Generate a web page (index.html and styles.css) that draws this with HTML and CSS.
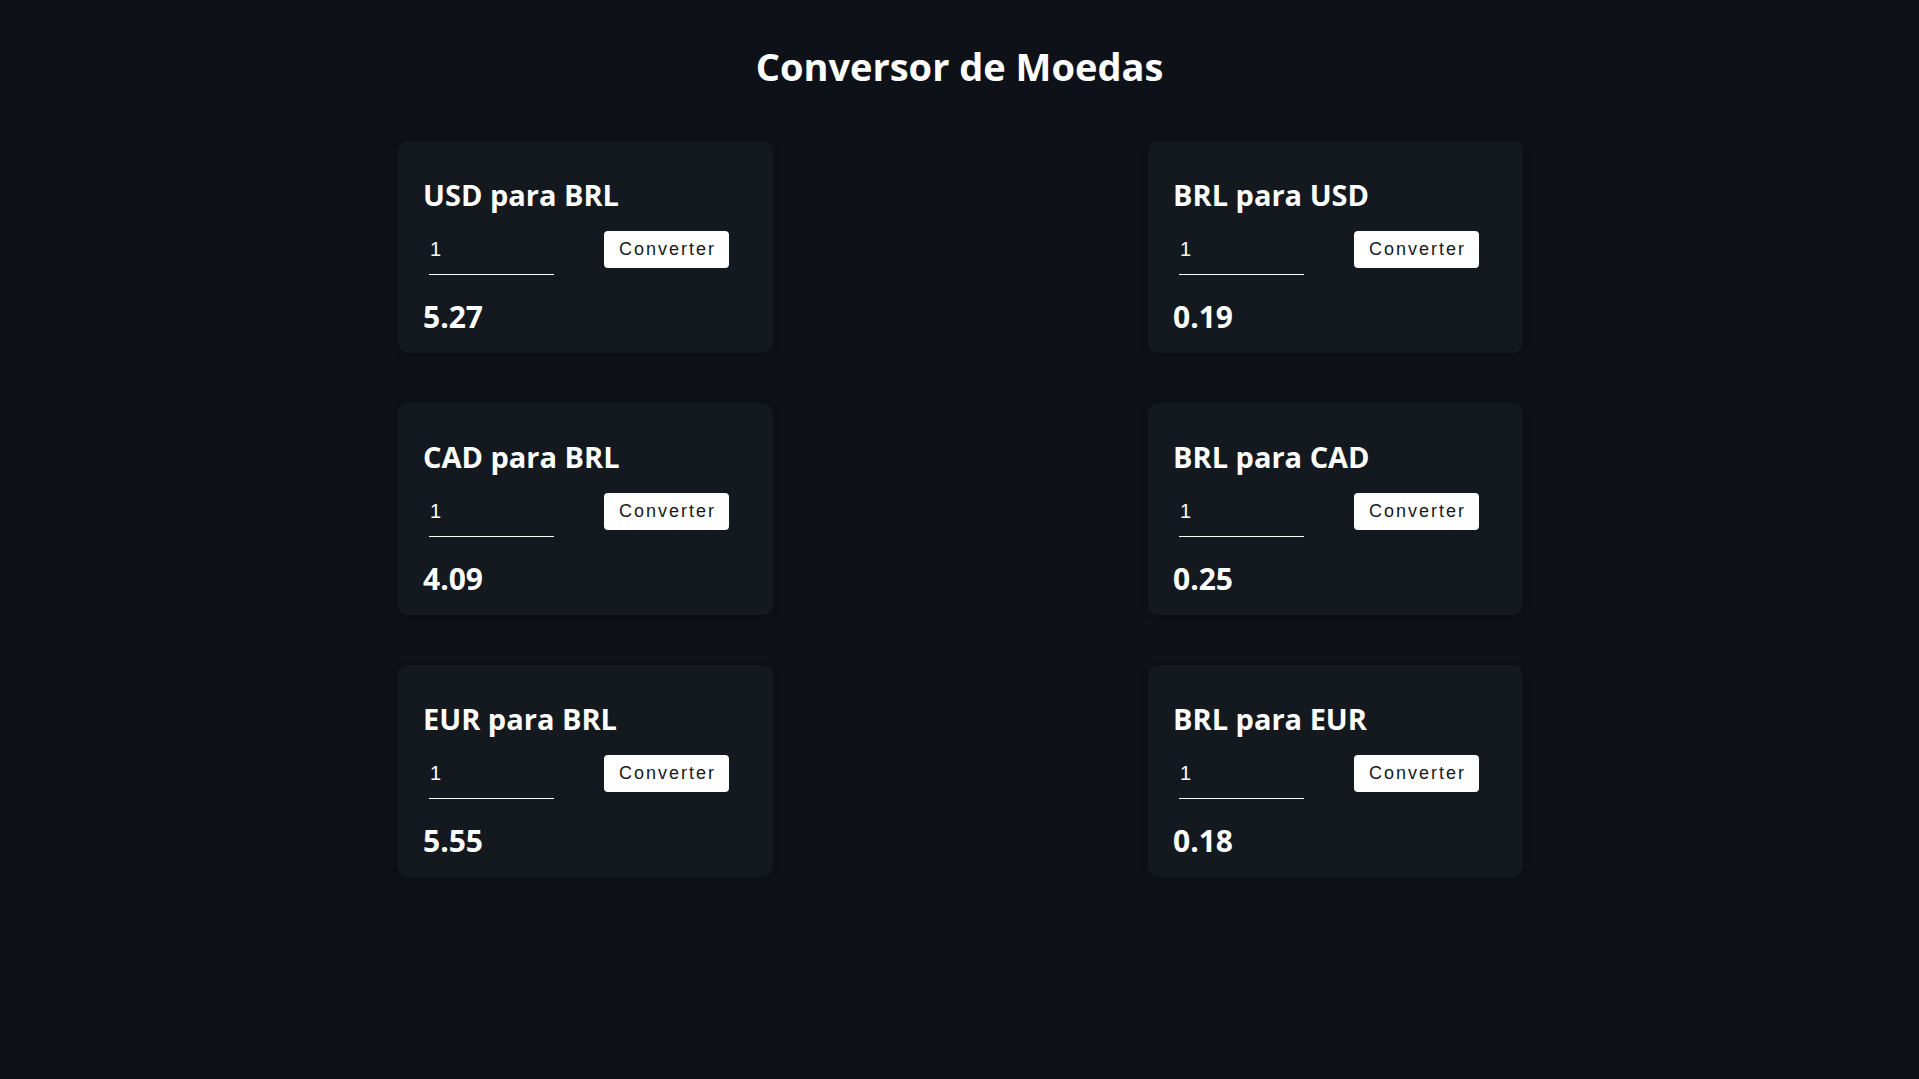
FILE: index.html
```html
<!DOCTYPE html>
<html lang="pt-BR">
<head>
<meta charset="utf-8">
<title>Conversor de Moedas</title>
<link rel="stylesheet" href="styles.css">
</head>
<body>
<main class="page">
  <h1 class="title">Conversor de Moedas</h1>
  <section class="grid">
    <div class="card">
      <h2 class="card-title">USD para BRL</h2>
      <div class="row"><input class="amount" type="number" value="1"><button class="convert">Converter</button></div>
      <p class="result">5.27</p>
    </div>
    <div class="card">
      <h2 class="card-title">BRL para USD</h2>
      <div class="row"><input class="amount" type="number" value="1"><button class="convert">Converter</button></div>
      <p class="result">0.19</p>
    </div>
    <div class="card">
      <h2 class="card-title">CAD para BRL</h2>
      <div class="row"><input class="amount" type="number" value="1"><button class="convert">Converter</button></div>
      <p class="result">4.09</p>
    </div>
    <div class="card">
      <h2 class="card-title">BRL para CAD</h2>
      <div class="row"><input class="amount" type="number" value="1"><button class="convert">Converter</button></div>
      <p class="result">0.25</p>
    </div>
    <div class="card">
      <h2 class="card-title">EUR para BRL</h2>
      <div class="row"><input class="amount" type="number" value="1"><button class="convert">Converter</button></div>
      <p class="result">5.55</p>
    </div>
    <div class="card">
      <h2 class="card-title">BRL para EUR</h2>
      <div class="row"><input class="amount" type="number" value="1"><button class="convert">Converter</button></div>
      <p class="result">0.18</p>
    </div>
  </section>
</main>
</body>
</html>
```
FILE: styles.css
```css
html, body {
  margin: 0;
  padding: 0;
  background: #0e1117;
  color: #ffffff;
  font-family: "Open Sans", "Noto Sans", sans-serif;
}
.page {
  padding-top: 42px;
}
.title {
  margin: 0 0 51px;
  text-align: center;
  font-size: 38px;
  line-height: 48px;
  font-weight: 700;
}
.grid {
  width: 1125px;
  margin: 0 auto;
  padding-left: 2px;
  display: grid;
  grid-template-columns: 375px 375px;
  justify-content: space-between;
  row-gap: 50px;
}
.card {
  background: #14181f;
  border-radius: 10px;
  padding: 36px 25px 18px;
  box-shadow: 0 2px 6px rgba(0,0,0,0.25);
}
.card-title {
  margin: 0;
  font-size: 29px;
  line-height: 36px;
  font-weight: 700;
}
.row {
  display: flex;
  align-items: flex-start;
  margin-top: 18px;
}
.amount {
  box-sizing: border-box;
  width: 125px;
  height: 44px;
  margin: 0 0 0 6px;
  padding: 0 0 7px 1px;
  background: transparent;
  border: none;
  border-bottom: 1px solid #ffffff;
  color: #ffffff;
  font-family: "Liberation Sans", Arial, sans-serif;
  font-size: 20px;
  outline: none;
  -moz-appearance: textfield;
}
.amount::-webkit-outer-spin-button,
.amount::-webkit-inner-spin-button {
  -webkit-appearance: none;
  margin: 0;
}
.convert {
  box-sizing: border-box;
  width: 125px;
  height: 37px;
  margin-left: 50px;
  padding: 0;
  border: none;
  border-radius: 4px;
  background: #ffffff;
  color: #16181c;
  font-family: "Liberation Sans", Arial, sans-serif;
  font-size: 18px;
  letter-spacing: 2px;
  text-indent: 2px;
  cursor: pointer;
}
.result {
  margin: 24px 0 0;
  font-size: 30px;
  line-height: 36px;
  font-weight: 700;
}
```
